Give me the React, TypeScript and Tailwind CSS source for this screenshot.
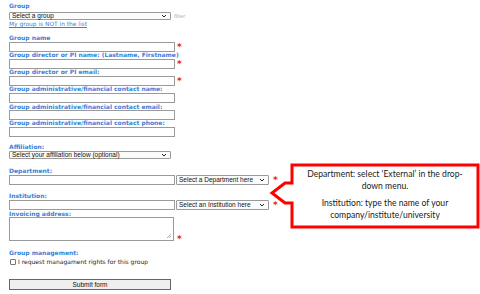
import { ReactNode } from 'react'

const labelCls = "h-[6px] leading-[6px] text-[6px] font-bold text-[#3a7fd6] whitespace-nowrap"

function Label({ children, className = '' }: { children: ReactNode; className?: string }) {
  return <div className={`${labelCls} ${className}`}>{children}</div>
}

function Star({ className = '' }: { className?: string }) {
  return <span className={`text-[9px] leading-[9px] text-[#e8202a] font-bold ${className}`}>*</span>
}

function TextBox({ className = '' }: { className?: string }) {
  return <div className={`h-[10px] border border-[#9a9a9a] bg-white ${className}`} />
}

function Chevron() {
  return (
    <svg width="6" height="4" viewBox="0 0 6 4" className="shrink-0">
      <path d="M1 1 L3 3 L5 1" fill="none" stroke="#222" strokeWidth="1" />
    </svg>
  )
}

function Select({ text, className = '' }: { text: string; className?: string }) {
  return (
    <div className={`flex items-center justify-between border border-[#9a9a9a] bg-[#fbfbfb] rounded-[1px] pl-[2px] pr-[3px] font-['Liberation_Sans',sans-serif] text-[6.5px] text-[#111] whitespace-nowrap ${className}`}>
      <span>{text}</span>
      <Chevron />
    </div>
  )
}

function Callout() {
  return (
    <div className="absolute left-[268px] top-[160px] w-[212px] h-[72px]">
      <svg width="212" height="72" viewBox="0 0 212 72" className="absolute inset-0">
        <polygon
          points="24,5 210,5 210,67 24,67 24,43 17,43 4,33 17,23 24,23"
          fill="#ffffff"
          stroke="#ff0000"
          strokeWidth="3"
          strokeLinejoin="miter"
        />
      </svg>
      <div className="absolute left-[27px] top-[8px] w-[180px] flex flex-col items-center text-center font-['Lato',sans-serif] text-[8.6px] leading-[12px] text-[#1a1a1a]">
        <p>Department: select ‘External’ in the drop-</p>
        <p>down menu.</p>
        <p className="mt-[5px]">Institution: type the name of your</p>
        <p>company/institute/university</p>
      </div>
    </div>
  )
}

export default function App() {
  return (
    <div className="relative w-[480px] h-[294px] overflow-hidden bg-white font-['DejaVu_Sans',Verdana,sans-serif]">
      <div className="flex flex-col pl-[9px] pt-[3px]">
        <Label>Group</Label>
        <div className="flex items-center mt-[3px]">
          <Select text="Select a group" className="w-[162px] h-[8px]" />
          <span className="ml-[3px] text-[6px] leading-[8px] text-[#b5b5b5] font-['Liberation_Sans',sans-serif]">filter</span>
        </div>
        <div className="mt-[1px] h-[7px] leading-[7px] text-[5.9px] text-[#3a7fd6] underline whitespace-nowrap">My group is NOT in the list</div>

        <Label className="mt-[7px]">Group name</Label>
        <div className="flex mt-[1px]">
          <TextBox className="w-[166px]" />
          <Star className="ml-[2px] mt-[1px]" />
        </div>

        <Label>Group director or PI name: (Lastname, Firstname)</Label>
        <div className="flex mt-[1px]">
          <TextBox className="w-[166px]" />
          <Star className="ml-[2px] mt-[1px]" />
        </div>

        <Label>Group director or PI email:</Label>
        <div className="flex mt-[1px]">
          <TextBox className="w-[166px]" />
          <Star className="ml-[2px] mt-[1px]" />
        </div>

        <Label>Group administrative/financial contact name:</Label>
        <div className="flex mt-[1px]">
          <TextBox className="w-[166px]" />
        </div>

        <Label className="mt-[1px]">Group administrative/financial contact email:</Label>
        <div className="flex">
          <TextBox className="w-[166px]" />
        </div>

        <Label>Group administrative/financial contact phone:</Label>
        <div className="flex mt-[1px]">
          <TextBox className="w-[166px]" />
        </div>

        <Label className="mt-[7px]">Affiliation:</Label>
        <div className="flex mt-[1px]">
          <Select text="Select your affiliation below (optional)" className="w-[162px] h-[8px]" />
        </div>

        <Label className="mt-[9px]">Department:</Label>
        <div className="flex mt-[1px]">
          <TextBox className="w-[166px]" />
          <Select text="Select a Department here" className="ml-[1px] w-[93px] h-[10px]" />
          <Star className="ml-[4px] mt-[1px]" />
        </div>

        <Label className="mt-[8px]">Institution:</Label>
        <div className="flex mt-[1px]">
          <TextBox className="w-[166px]" />
          <Select text="Select an Institution here" className="ml-[1px] w-[93px] h-[10px]" />
          <Star className="ml-[4px] mt-[1px]" />
        </div>

        <Label className="mt-[1px]">Invoicing address:</Label>
        <div className="flex items-end">
          <div className="relative w-[165px] h-[24px] border border-[#9a9a9a] bg-white">
            <svg width="6" height="6" viewBox="0 0 6 6" className="absolute right-[1px] bottom-[1px]">
              <path d="M5 1 L1 5 M5 3 L3 5" stroke="#999" strokeWidth="0.8" />
            </svg>
          </div>
          <Star className="ml-[3px] mb-[-3px]" />
        </div>

        <Label className="mt-[9px]">Group management:</Label>
        <div className="flex items-center mt-[3px] h-[6px]">
          <span className="w-[6px] h-[6px] border border-[#777] rounded-[1px] bg-white ml-[1px]" />
          <span className="ml-[2px] text-[6px] leading-[6px] text-[#222] whitespace-nowrap">I request managament rights for this group</span>
        </div>

        <div className="mt-[14px] w-[162px] h-[11px] border border-[#666] bg-[#efefef] flex items-center justify-center font-['Liberation_Sans',sans-serif] text-[6.5px] text-[#111]">
          Submit form
        </div>
      </div>
      <Callout />
    </div>
  )
}
